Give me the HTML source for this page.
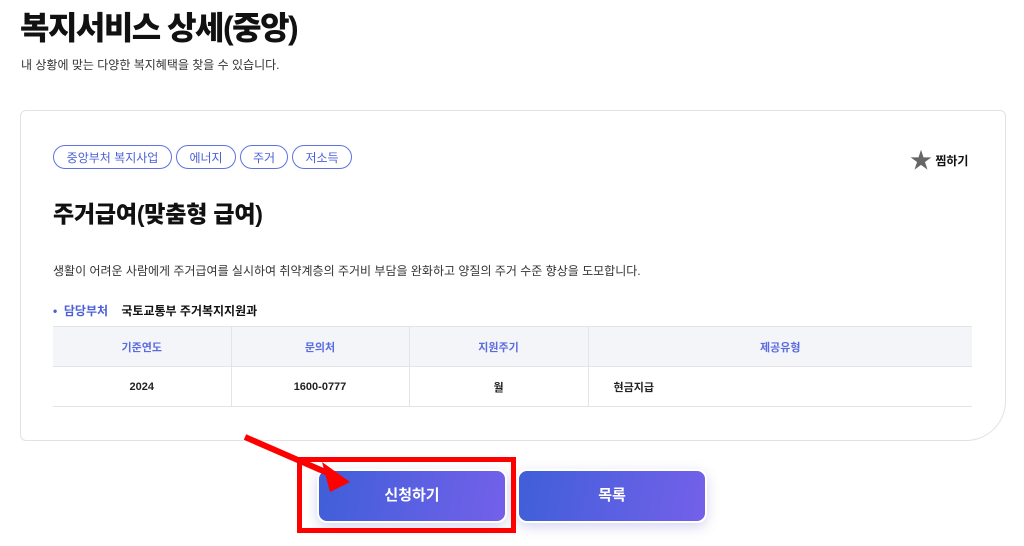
<!DOCTYPE html><html><head><meta charset="utf-8"><style>
*{margin:0;padding:0;box-sizing:border-box}
body{width:1024px;height:546px;background:#fff;font-family:"Liberation Sans","Noto Sans CJK KR",sans-serif;position:relative;overflow:hidden;color:#111}
.a{position:absolute}
h1{position:absolute;left:20px;top:3px;font-size:32px;font-weight:900;letter-spacing:-1.5px}
.sub{left:21px;top:56px;font-size:12px;color:#333}
.card{left:20px;top:110px;width:986px;height:331px;border:1px solid #e2e2e6;border-radius:6px 6px 40px 6px}
.tag{position:absolute;top:145px;height:24px;border:1.5px solid #5e72e4;border-radius:12px;color:#4a5fd6;font-size:12px;line-height:24px;text-align:center}
h2{position:absolute;left:53px;top:195px;font-size:23px;font-weight:900;letter-spacing:-0.2px}
table{position:absolute;left:53px;top:326px;width:919px;border-collapse:collapse;font-size:11px}
td,th{border:1px solid #e3e3e8;border-left:none;height:40px;text-align:center}
tr td:last-child,tr th:last-child{border-right:none}
th{background:#f4f5f9;color:#5b6be0;font-weight:bold}
td{font-weight:bold;color:#222}
.btn{position:absolute;top:469px;height:54px;width:190px;border-radius:10px;background:linear-gradient(100deg,#3f5fd8,#7460ea);color:#fff;font-weight:bold;font-size:15px;line-height:50px;text-align:center;box-shadow:0 4px 12px rgba(90,90,200,.25);border:2px solid #fff}
</style></head><body>
<h1>복지서비스 상세(중앙)</h1>
<div class="a sub">내 상황에 맞는 다양한 복지혜택을 찾을 수 있습니다.</div>
<div class="a card"></div>
<div class="tag" style="left:53px;width:119px">중앙부처 복지사업</div>
<div class="tag" style="left:176px;width:60px">에너지</div>
<div class="tag" style="left:240px;width:48px">주거</div>
<div class="tag" style="left:292px;width:60px">저소득</div>
<div class="a" style="left:910px;top:143px;font-size:12px;font-weight:bold"><span style="color:#666;font-size:22px;vertical-align:-3px">★</span> 찜하기</div>
<h2>주거급여(맞춤형 급여)</h2>
<div class="a" style="left:53px;top:262px;font-size:12px;color:#333">생활이 어려운 사람에게 주거급여를 실시하여 취약계층의 주거비 부담을 완화하고 양질의 주거 수준 향상을 도모합니다.</div>
<div class="a" style="left:53px;top:302px;font-size:12px;font-weight:bold"><span style="color:#4a5fd6">•&nbsp; 담당부처</span>&nbsp;&nbsp;&nbsp; 국토교통부 주거복지지원과</div>
<table><tr><th style="width:178px">기준연도</th><th style="width:178px">문의처</th><th style="width:179px">지원주기</th><th>제공유형</th></tr>
<tr><td>2024</td><td>1600-0777</td><td>월</td><td style="text-align:left;padding-left:25px">현금지급</td></tr></table>
<div class="btn" style="left:317px">신청하기</div>
<div class="btn" style="left:517px">목록</div>
<div class="a" style="left:297px;top:457px;width:219px;height:76px;border:5px solid #f00"></div>
<svg class="a" style="left:0;top:0" width="1024" height="546"><line x1="245" y1="437" x2="330" y2="474" stroke="#f00" stroke-width="6"/><polygon points="350,482 322,462 330,492" fill="#f00"/></svg>
</body></html>
